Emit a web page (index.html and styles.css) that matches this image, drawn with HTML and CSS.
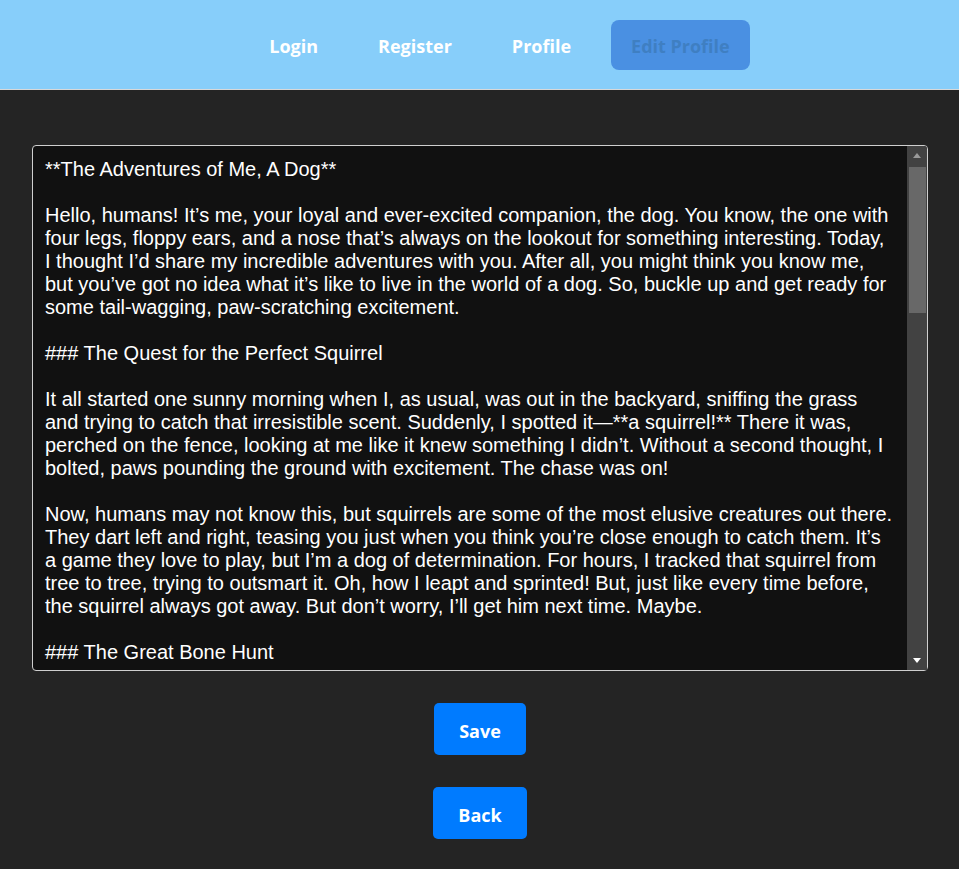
FILE: index.html
```html
<!DOCTYPE html>
<html lang="en">
<head>
<meta charset="utf-8">
<title>Edit Profile</title>
<link rel="stylesheet" href="styles.css">
</head>
<body>
<header class="topbar">
  <ul class="nav">
    <li><a class="nav-link" href="#">Login</a></li>
    <li><a class="nav-link" href="#">Register</a></li>
    <li><a class="nav-link" href="#">Profile</a></li>
    <li><a class="nav-link active" href="#">Edit Profile</a></li>
  </ul>
</header>
<main class="editor">
<div class="bio-wrap">
<textarea class="bio" spellcheck="false">**The Adventures of Me, A Dog**

Hello, humans! It’s me, your loyal and ever-excited companion, the dog. You know, the one with four legs, floppy ears, and a nose that’s always on the lookout for something interesting. Today, I thought I’d share my incredible adventures with you. After all, you might think you know me, but you’ve got no idea what it’s like to live in the world of a dog. So, buckle up and get ready for some tail-wagging, paw-scratching excitement.

### The Quest for the Perfect Squirrel

It all started one sunny morning when I, as usual, was out in the backyard, sniffing the grass and trying to catch that irresistible scent. Suddenly, I spotted it—**a squirrel!** There it was, perched on the fence, looking at me like it knew something I didn’t. Without a second thought, I bolted, paws pounding the ground with excitement. The chase was on!

Now, humans may not know this, but squirrels are some of the most elusive creatures out there. They dart left and right, teasing you just when you think you’re close enough to catch them. It’s a game they love to play, but I’m a dog of determination. For hours, I tracked that squirrel from tree to tree, trying to outsmart it. Oh, how I leapt and sprinted! But, just like every time before, the squirrel always got away. But don’t worry, I’ll get him next time. Maybe.

### The Great Bone Hunt

Later that afternoon, I decided it was time for something a little more rewarding: the great bone hunt. You see, a few days ago I buried my favorite bone somewhere in the garden. The problem is, I can’t quite remember where. So I did what any clever dog would do. I started digging. Everywhere.

I dug under the rose bushes. I dug beside the tomato plants. I even dug a very impressive hole right in the middle of the lawn. My humans didn’t seem as excited about it as I was, but that’s okay. Some people just don’t understand the thrill of treasure hunting. After what felt like forever, my nose finally led me to the spot, and there it was: my bone, a little muddy, but perfect.

### Bath Time (The Horror)

Of course, all that digging came with a price. My humans took one look at my muddy paws and said the word I dread most: **bath**. I tried hiding under the bed. I tried looking extra cute. I even tried pretending I was asleep. Nothing worked.

The water was warm, the soap smelled like flowers, and I smelled like a flower garden instead of a proper dog. As soon as they let me go, I shook myself off all over the bathroom and then rolled on the carpet to get my real smell back. Mission accomplished.

### Walk Time!

The best part of the day, though, is always the evening walk. When I hear the jingle of my leash, my tail starts wagging so fast I think I might take off and fly. Out on the sidewalk, there are so many smells to explore: other dogs, fallen leaves, the pizza place on the corner, and that one tree that everyone seems to love.

I met my best friend, a fluffy golden retriever named Max, and we sniffed each other hello. We ran in circles in the park, chased a ball, and barked at a very suspicious plastic bag that was blowing in the wind. You can never be too careful with plastic bags.

### Dinner and Dreams

When we got home, it was dinner time. I sat perfectly still, my eyes fixed on my bowl, and waited like the very good dog I am. The food disappeared in about four seconds. Then I spent the next ten minutes staring at my humans while they ate, just in case something fell on the floor.

Finally, after a long and exciting day, I curled up on my favorite blanket by the couch. My humans scratched behind my ears and told me I was a good boy. And as I drifted off to sleep, I dreamed of squirrels, bones, and tomorrow’s adventures.

Because for a dog, every day is an adventure. And I wouldn’t trade it for anything in the world.

Woof!
</textarea>
<div class="scrollbar" aria-hidden="true">
  <div class="sb-btn"><span class="arrow-up"></span></div>
  <div class="sb-track"><div class="sb-thumb"></div></div>
  <div class="sb-btn"><span class="arrow-down"></span></div>
</div>
</div>
<div class="actions">
  <button class="btn" type="button">Save</button>
  <button class="btn" type="button">Back</button>
</div>
</main>
</body>
</html>
```

FILE: styles.css
```css
html, body {
  margin: 0;
  padding: 0;
  background: #242424;
}

body {
  font-family: "Open Sans", "Noto Sans", sans-serif;
  color: #fff;
}

.topbar {
  background: #87cefa;
  border-bottom: 1px solid #d8d8d8;
  height: 89px;
  display: flex;
  align-items: center;
}

.nav {
  list-style: none;
  margin: 0;
  padding: 0 0 0 40px;
  flex: 1;
  display: flex;
  justify-content: center;
  gap: 20px;
}

.nav-link {
  display: block;
  padding: 13px 20px 11px;
  font-size: 18px;
  font-weight: 700;
  line-height: 26px;
  color: #fff;
  text-decoration: none;
  border-radius: 8px;
}

.nav-link.active {
  background: #4a90e2;
  color: #3f7fc2;
}

.editor {
  padding: 55px 31px 0 32px;
  display: flex;
  flex-direction: column;
  align-items: center;
}

.bio-wrap {
  position: relative;
  width: 896px;
  height: 526px;
}

.bio {
  display: block;
  box-sizing: border-box;
  width: 100%;
  height: 100%;
  margin: 0;
  padding: 12px 32px 12px 12px;
  background: #111;
  color: #fff;
  border: 1px solid #cfcfcf;
  border-radius: 4px;
  font-family: "Liberation Sans", Arial, sans-serif;
  font-size: 20px;
  line-height: 23px;
  resize: none;
  outline: none;
  overflow: hidden;
}

.scrollbar {
  position: absolute;
  top: 1px;
  right: 1px;
  bottom: 1px;
  width: 20px;
  background: #424242;
  border-top-right-radius: 3px;
  display: flex;
  flex-direction: column;
}

.sb-btn {
  height: 20px;
  flex: none;
  display: flex;
  align-items: center;
  justify-content: center;
}

.sb-track {
  flex: 1;
  padding: 1px 1px 0 2px;
}

.sb-thumb {
  height: 146px;
  background: #686868;
}

.arrow-up {
  width: 0;
  height: 0;
  border-left: 4.5px solid transparent;
  border-right: 4.5px solid transparent;
  border-bottom: 5px solid #9a9a9a;
  margin-top: -1px;
}

.arrow-down {
  width: 0;
  height: 0;
  border-left: 4.5px solid transparent;
  border-right: 4.5px solid transparent;
  border-top: 5px solid #ffffff;
}

.actions {
  display: flex;
  flex-direction: column;
  align-items: center;
  gap: 32px;
  margin-top: 32px;
}

.btn {
  background: #007bff;
  color: #fff;
  border: none;
  border-radius: 5px;
  padding: 15px 25px 11px;
  font-family: "Open Sans", "Noto Sans", sans-serif;
  font-size: 18px;
  font-weight: 700;
  line-height: 26px;
  cursor: pointer;
}
```
